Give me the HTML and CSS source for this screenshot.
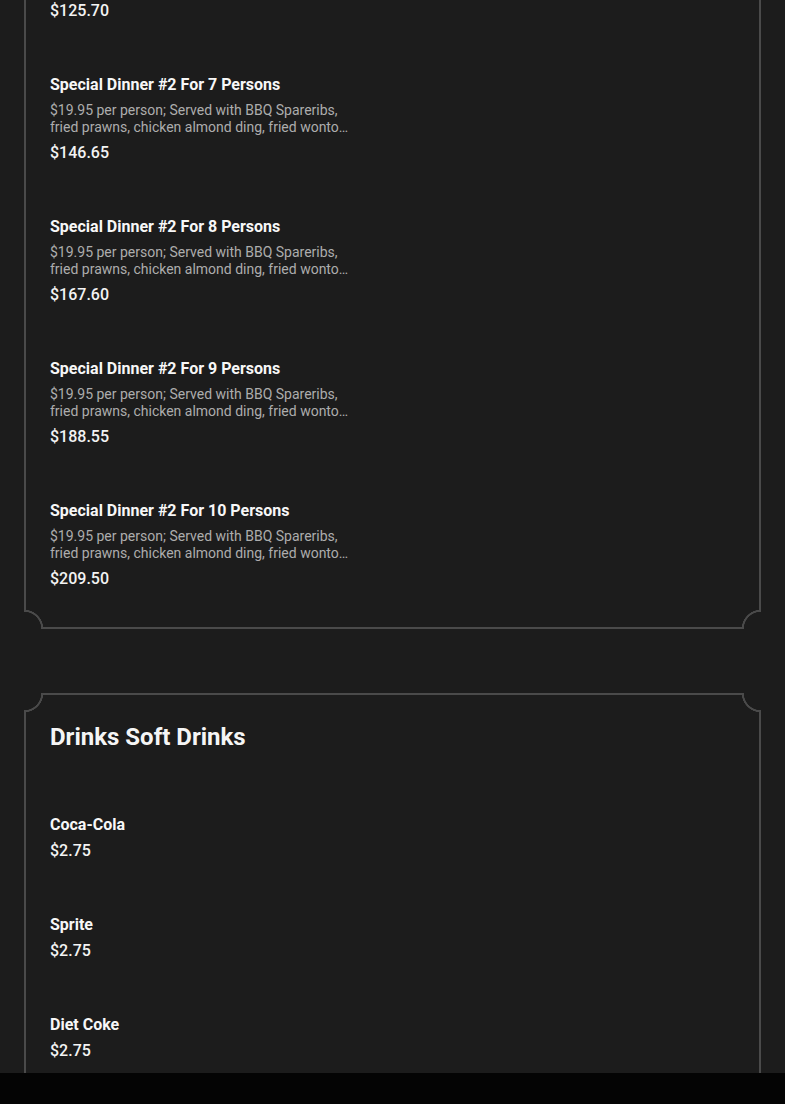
FILE: index.html
```html
<!DOCTYPE html>
<html lang="en">
<head>
<meta charset="utf-8">
<title>Menu</title>
<link rel="stylesheet" href="styles.css">
</head>
<body>
<main class="page">
  <section class="card card--cont">
    <div class="items">
      <div class="item"><p class="price">$125.70</p></div>
      <div class="item">
        <h3 class="name">Special Dinner #2 For 7 Persons</h3>
        <p class="desc"><span class="desc-line">$19.95 per person; Served with BBQ Spareribs,</span><span class="desc-line desc-line--cut">fried prawns, chicken almond ding, fried wontons, sweet and sour pork and pork fried rice.</span></p>
        <p class="price">$146.65</p>
      </div>
      <div class="item">
        <h3 class="name">Special Dinner #2 For 8 Persons</h3>
        <p class="desc"><span class="desc-line">$19.95 per person; Served with BBQ Spareribs,</span><span class="desc-line desc-line--cut">fried prawns, chicken almond ding, fried wontons, sweet and sour pork and pork fried rice.</span></p>
        <p class="price">$167.60</p>
      </div>
      <div class="item">
        <h3 class="name">Special Dinner #2 For 9 Persons</h3>
        <p class="desc"><span class="desc-line">$19.95 per person; Served with BBQ Spareribs,</span><span class="desc-line desc-line--cut">fried prawns, chicken almond ding, fried wontons, sweet and sour pork and pork fried rice.</span></p>
        <p class="price">$188.55</p>
      </div>
      <div class="item">
        <h3 class="name">Special Dinner #2 For 10 Persons</h3>
        <p class="desc"><span class="desc-line">$19.95 per person; Served with BBQ Spareribs,</span><span class="desc-line desc-line--cut">fried prawns, chicken almond ding, fried wontons, sweet and sour pork and pork fried rice.</span></p>
        <p class="price">$209.50</p>
      </div>
    </div>
    <span class="corner corner--bl"></span>
    <span class="corner corner--br"></span>
  </section>

  <section class="card">
    <span class="corner corner--tl"></span>
    <span class="corner corner--tr"></span>
    <h2 class="card-title">Drinks Soft Drinks</h2>
    <div class="items">
      <div class="item item--simple">
        <h3 class="name">Coca-Cola</h3>
        <p class="price">$2.75</p>
      </div>
      <div class="item item--simple">
        <h3 class="name">Sprite</h3>
        <p class="price">$2.75</p>
      </div>
      <div class="item item--simple">
        <h3 class="name">Diet Coke</h3>
        <p class="price">$2.75</p>
      </div>
      <div class="item item--simple">
        <h3 class="name">Ginger Ale</h3>
        <p class="price">$2.75</p>
      </div>
    </div>
  </section>
</main>
<div class="bottom-bar"></div>
</body>
</html>
```

FILE: styles.css
```css
* { box-sizing: border-box; }

html, body {
  margin: 0;
  padding: 0;
  background: #1c1c1c;
}

body {
  font-family: Roboto, "Noto Sans", "Liberation Sans", sans-serif;
  color: #ffffff;
  overflow: hidden;
  height: 1104px;
}

.page {
  padding: 0 24px;
  display: flex;
  flex-direction: column;
  gap: 64px;
}

.card {
  position: relative;
  border: 2px solid #4a4a4a;
  padding: 28px 24px 39px 24px;
}

.card--cont {
  border-top: none;
  padding-top: 1px;
  padding-bottom: 38px;
}

.card-title {
  margin: 0 0 64px 0;
  font-size: 24px;
  line-height: 28px;
  font-weight: 700;
  color: #f5f5f5;
}

.items {
  display: flex;
  flex-direction: column;
  gap: 54px;
}

.item {
  display: flex;
  flex-direction: column;
}

.item .desc {
  margin-top: 7px;
}

.item .desc + .price {
  margin-top: 7px;
}

.item--simple .price {
  margin-top: 6px;
}

.name {
  margin: 0;
  font-size: 16px;
  line-height: 20px;
  font-weight: 700;
  color: #f7f7f7;
}

.desc {
  margin: 0;
  width: 300px;
  font-size: 14px;
  line-height: 17px;
  color: #adadad;
}

.desc-line {
  display: block;
  white-space: nowrap;
  overflow: hidden;
}

.desc-line--cut {
  text-overflow: ellipsis;
}

.price {
  margin: 0;
  font-size: 16px;
  line-height: 20px;
  font-weight: 500;
  color: #f3f3f3;
}

.corner {
  position: absolute;
  width: 21px;
  height: 21px;
}

.corner--bl {
  left: -2px;
  bottom: -2px;
  background: radial-gradient(circle at 0 100%, #1c1c1c 17px, #4a4a4a 17.5px, #4a4a4a 19px, transparent 19.5px);
}

.corner--br {
  right: -2px;
  bottom: -2px;
  background: radial-gradient(circle at 100% 100%, #1c1c1c 17px, #4a4a4a 17.5px, #4a4a4a 19px, transparent 19.5px);
}

.corner--tl {
  left: -2px;
  top: -2px;
  background: radial-gradient(circle at 0 0, #1c1c1c 17px, #4a4a4a 17.5px, #4a4a4a 19px, transparent 19.5px);
}

.corner--tr {
  right: -2px;
  top: -2px;
  background: radial-gradient(circle at 100% 0, #1c1c1c 17px, #4a4a4a 17.5px, #4a4a4a 19px, transparent 19.5px);
}

.bottom-bar {
  position: fixed;
  left: 0;
  right: 0;
  bottom: 0;
  height: 31px;
  background: #040404;
}
```
